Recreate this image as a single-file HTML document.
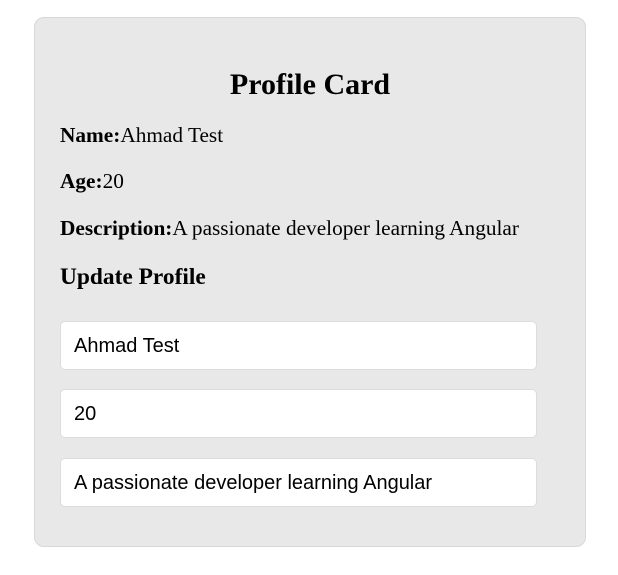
<!DOCTYPE html>
<html><head><style>
html,body{margin:0;padding:0;background:#fff;width:618px;height:575px;overflow:hidden}
.card{position:absolute;left:34px;top:17px;width:550px;height:528px;background:#e8e8e8;border:1px solid #d8d8d8;border-radius:10px}
.t{position:absolute;font-family:"Liberation Serif",serif;color:#000;white-space:nowrap;line-height:1}
.in{position:absolute;left:60px;height:47px;background:#fff;border:1px solid #dcdcdc;border-radius:5px;font-family:"Liberation Sans",sans-serif;font-size:20px;line-height:49px;padding-left:13px;box-sizing:content-box;width:462px}
</style></head><body>
<div class="card"></div>
<div class="t" style="left:0;width:620px;text-align:center;top:70px;font-size:30px;font-weight:bold">Profile Card</div>
<div class="t" style="left:60px;top:125px;font-size:21.3px"><b>Name:</b>Ahmad Test</div>
<div class="t" style="left:60px;top:171px;font-size:21.3px"><b>Age:</b>20</div>
<div class="t" style="left:60px;top:218px;font-size:21.3px"><b>Description:</b>A passionate developer learning Angular</div>
<div class="t" style="left:60px;top:266px;font-size:23.4px;font-weight:bold">Update Profile</div>
<div class="in" style="top:321px">Ahmad Test</div>
<div class="in" style="top:389px">20</div>
<div class="in" style="top:458px">A passionate developer learning Angular</div>
</body></html>
